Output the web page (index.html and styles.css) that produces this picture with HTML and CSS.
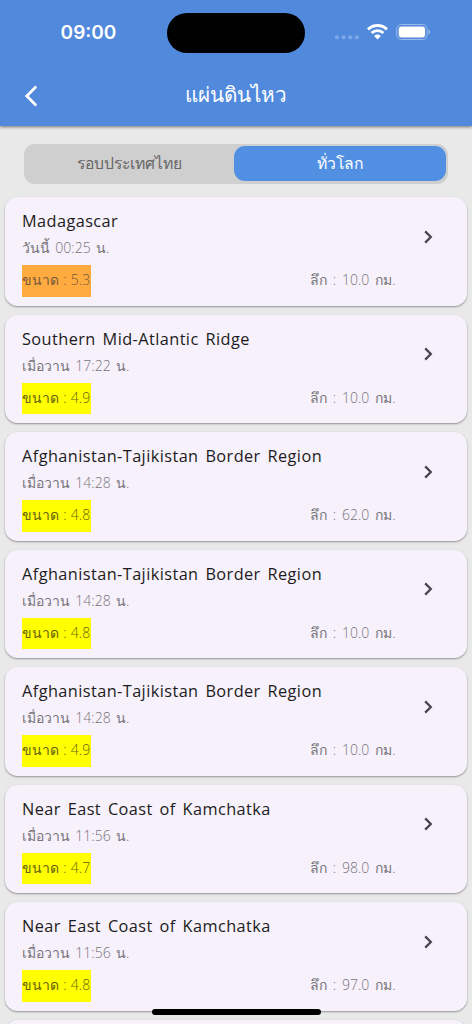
FILE: index.html
```html
<!DOCTYPE html>
<html lang="th">
<head>
<meta charset="utf-8">
<title>แผ่นดินไหว</title>
<link rel="stylesheet" href="styles.css">
</head>
<body>
<div class="screen">
  <header class="header">
    <div class="status">
      <span class="clock">09:00</span>
      <span class="island"></span>
      <svg class="indicators" width="100" height="20" viewBox="0 0 100 20">
        <g fill="#fff" fill-opacity=".25"><circle cx="6" cy="15.3" r="2.1"/><circle cx="12.6" cy="15.3" r="2.1"/><circle cx="19.2" cy="15.3" r="2.1"/><circle cx="25.9" cy="15.3" r="2.1"/></g>
        <g fill="none" stroke="#fff" stroke-width="2.9"><path d="M37 7.4a13.6 13.6 0 0 1 19 0"/><path d="M40.6 11a8.4 8.4 0 0 1 11.8 0"/></g>
        <path d="M46.5 17.4l-3.4-3.4a4.8 4.8 0 0 1 6.8 0z" fill="#fff"/>
        <rect x="65.7" y="2.5" width="30.4" height="15" rx="4.8" fill="none" stroke="#fff" stroke-opacity=".42"/>
        <rect x="67.7" y="4.6" width="26.4" height="10.8" rx="3" fill="#fff"/>
        <path d="M97.6 7.6c1.8.7 1.8 4.1 0 4.8z" fill="#fff" fill-opacity=".5"/>
      </svg>
    </div>
    <div class="navbar">
      <svg class="back" width="24" height="24" viewBox="0 0 24 24"><path d="M17.2 2.6L7.8 12l9.4 9.4" fill="none" stroke="#fff" stroke-width="2.8"/></svg>
      <h1 class="heading">แผ่นดินไหว</h1>
      <span class="balance"></span>
    </div>
  </header>
  <nav class="tabs">
    <span class="tab">รอบประเทศไทย</span>
    <span class="tab selected">ทั่วโลก</span>
  </nav>
  <main class="list" id="list"></main>
  <div class="home-bar"></div>
</div>
<script src="app.js"></script>
</body>
</html>
```
FILE: styles.css
```css
body {
  margin: 0;
  font-family: "Open Sans", sans-serif;
}
.screen {
  position: relative;
  width: 472px;
  height: 1024px;
  overflow: hidden;
  background: #e9e9e9;
}
.header {
  height: 126px;
  background: #5189dc;
  box-shadow: 0 1px 3px rgba(0, 0, 0, .5);
  color: #fff;
}
.status {
  display: grid;
  grid-template-columns: 167px 138px 1fr;
  align-items: center;
  height: 65px;
}
.clock {
  padding-left: 10px;
  text-align: center;
  font: 600 19px/24px Inter, sans-serif;
}
.island {
  height: 40px;
  border-radius: 20px;
  background: #000;
}
.indicators {
  margin: -1px 0 0 26px;
}
.navbar {
  display: grid;
  grid-template-columns: 56px 1fr 56px;
  align-items: center;
  height: 61px;
}
.back {
  margin-left: 19px;
}
.heading {
  margin: -3px 0 0;
  text-align: center;
  font-size: 20.7px;
  font-weight: 400;
  line-height: 30px;
}
.tabs {
  display: grid;
  grid-template-columns: 209.5px 1fr;
  box-sizing: border-box;
  width: 424px;
  height: 39.5px;
  margin: 18px 24px 0;
  padding: 2px 2px 2.5px 0;
  border-radius: 11px;
  background: #cfcfcf;
}
.tab {
  display: flex;
  align-items: center;
  justify-content: center;
  border-radius: 11px;
  font-size: 15.7px;
  color: #666;
}
.tab:first-child {
  padding-left: 2px;
}
.selected {
  background: #508fe2;
  color: #fff;
}
.list {
  display: grid;
  gap: 9px;
  padding: 13.5px 5px 0;
}
.card {
  display: grid;
  grid-template-columns: 288px 1fr 32px;
  grid-template-rows: 29px 26px 40px;
  box-sizing: border-box;
  height: 108.5px;
  padding: 9px 17px 0;
  border-radius: 12.5px;
  background: #f6f1fa;
  box-shadow: 0 1px 2px rgba(0, 0, 0, .38);
  color: #78747b;
  font-size: 14px;
  font-weight: 300;
  white-space: nowrap;
  word-spacing: 2.2px;
}
.place {
  grid-column: 1 / 3;
  margin: 0;
  font-size: 16.3px;
  font-weight: 400;
  line-height: 30.5px;
  letter-spacing: .43px;
  color: #1d1b20;
  word-spacing: 2.2px;
}
.arrow {
  grid-column: 3;
  grid-row: 1 / 3;
  margin: 18.5px 0 0 -2.5px;
}
.time {
  grid-column: 1 / 3;
  line-height: 25.5px;
  word-spacing: 1.7px;
}
.magnitude {
  align-self: start;
  justify-self: start;
  width: 68.5px;
  height: 31.5px;
  margin-top: 4px;
  line-height: 29px;
  background: #ff0;
  color: #68640f;
  word-spacing: .6px;
}
.strong {
  background: #ffab40;
  color: #785a3c;
}
.depth {
  grid-column: 2 / 4;
  margin-top: 4px;
  line-height: 29px;
}
.home-bar {
  position: absolute;
  left: 151.5px;
  top: 1009px;
  width: 169px;
  height: 6px;
  border-radius: 3px;
  background: #000;
}
```
FILE: app.js
```
const quakes = [
  ["Madagascar", "วันนี้ 00:25 น.", "5.3", "10.0"],
  ["Southern Mid-Atlantic Ridge", "เมื่อวาน 17:22 น.", "4.9", "10.0"],
  ["Afghanistan-Tajikistan Border Region", "เมื่อวาน 14:28 น.", "4.8", "62.0"],
  ["Afghanistan-Tajikistan Border Region", "เมื่อวาน 14:28 น.", "4.8", "10.0"],
  ["Afghanistan-Tajikistan Border Region", "เมื่อวาน 14:28 น.", "4.9", "10.0"],
  ["Near East Coast of Kamchatka", "เมื่อวาน 11:56 น.", "4.7", "98.0"],
  ["Near East Coast of Kamchatka", "เมื่อวาน 11:56 น.", "4.8", "97.0"]
];
document.getElementById("list").innerHTML = quakes.map(([place, time, mag, depth]) => `
  <article class="card">
    <h2 class="place">${place}</h2>
    <svg class="arrow" width="24" height="24" viewBox="0 0 24 24"><path d="M9.2 6.4l5.6 5.6-5.6 5.6" fill="none" stroke="#49454f" stroke-width="2.3"/></svg>
    <span class="time">${time}</span>
    <span class="magnitude${mag >= 5 ? " strong" : ""}">ขนาด : ${mag}</span>
    <span class="depth">ลึก : ${depth} กม.</span>
  </article>`).join("") + '<article class="card"></article>';
```
